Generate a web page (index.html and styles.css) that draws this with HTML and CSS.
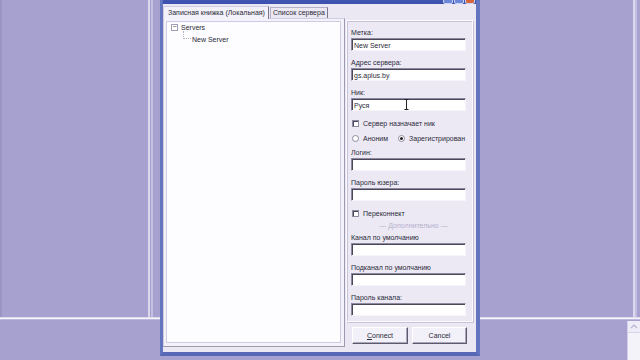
FILE: index.html
```html
<!DOCTYPE html>
<html lang="ru">
<head>
    <meta charset="UTF-8">
    <meta name="viewport" content="width=device-width, initial-scale=1.0">
    <title>Записная книжка</title>
    <link rel="stylesheet" href="styles.css">
</head>
<body>
<div class="desktop">
    <div class="bg-top">
        <div class="bg-left"></div>
        <div class="bg-split"></div>
        <div class="bg-main"></div>
        <div class="bg-split bg-split-right"></div>
        <div class="bg-edge"></div>
    </div>
    <div class="bg-bottom">
        <div class="bg-fill"></div>
        <div class="scrollbar">
            <div class="scroll-up">
                <svg width="8" height="5" viewBox="0 0 8 5"><path d="M1 4 L4 1 L7 4" fill="none" stroke="#b8b4d4" stroke-width="1.2"/></svg>
            </div>
        </div>
    </div>

    <div class="dialog">
        <div class="titlebar">
            <div class="title-buttons">
                <span class="tbtn"></span>
                <span class="tbtn"></span>
                <span class="tbtn tbtn-close"></span>
            </div>
        </div>
        <div class="dialog-body">
            <div class="left-col">
                <div class="tabs">
                    <div class="tab tab-active">Записная книжка (Локальная)</div>
                    <div class="tab">Список сервера</div>
                </div>
                <div class="tab-panel">
                    <div class="tree">
                        <div class="tree-root">
                            <span class="expander">−</span>
                            <span>Servers</span>
                        </div>
                        <div class="tree-child">
                            <span class="connector"></span>
                            <span>New Server</span>
                        </div>
                    </div>
                </div>
            </div>

            <div class="right-col">
                <div class="group">
                    <div class="field">
                        <div class="label">Метка:</div>
                        <div class="input">New Server</div>
                    </div>
                    <div class="field">
                        <div class="label">Адрес сервера:</div>
                        <div class="input">gs.aplus.by</div>
                    </div>
                    <div class="field">
                        <div class="label">Ник:</div>
                        <div class="input">Руся
                            <svg class="ibeam" width="5" height="11" viewBox="0 0 5 11"><path d="M0.5 0.5 H4.5 M2.5 0.5 V10.5 M0.5 10.5 H4.5" stroke="#222" stroke-width="1" fill="none"/></svg>
                        </div>
                    </div>
                    <div class="check-row">
                        <span class="checkbox"></span>
                        <span>Сервер назначает ник</span>
                    </div>
                    <div class="radio-row">
                        <span class="radio-item"><span class="radio"></span>Аноним</span>
                        <span class="radio-item"><span class="radio radio-on"></span>Зарегистрирован</span>
                    </div>
                    <div class="field">
                        <div class="label">Логин:</div>
                        <div class="input"></div>
                    </div>
                    <div class="field">
                        <div class="label">Пароль юзера:</div>
                        <div class="input"></div>
                    </div>
                    <div class="check-row check-row-tight">
                        <span class="checkbox"></span>
                        <span>Переконнект</span>
                    </div>
                    <div class="separator">— Дополнительно —</div>
                    <div class="field">
                        <div class="label">Канал по умолчанию</div>
                        <div class="input"></div>
                    </div>
                    <div class="field">
                        <div class="label">Подканал по умолчанию</div>
                        <div class="input"></div>
                    </div>
                    <div class="field">
                        <div class="label">Пароль канала:</div>
                        <div class="input"></div>
                    </div>
                </div>
                <div class="buttons">
                    <button class="btn"><u>C</u>onnect</button>
                    <button class="btn btn-cancel">Cancel</button>
                </div>
            </div>
        </div>
    </div>
</div>
</body>
</html>
```

FILE: styles.css
```css
body {
    margin: 0;
    font-family: "Liberation Sans", Arial, sans-serif;
    font-size: 7px;
    color: #2b2a38;
    background-color: #a7a1cf;
}

.desktop {
    position: relative;
    width: 640px;
    height: 360px;
    overflow: hidden;
    background-color: #a7a1cf;
}

/* background application behind the dialog */
.bg-top {
    display: flex;
    height: 317px;
    border-bottom: 1px solid #dedbee;
    box-shadow: 0 1px 0 #f6f5fb, 0 2px 0 #bdb8dc;
}

.bg-left {
    width: 148px;
    border-left: 2px solid #9b95c4;
    box-sizing: border-box;
}

.bg-split {
    width: 5px;
    border-left: 2px solid #dcd8ee;
    border-right: 2px solid #c4bfe0;
    box-sizing: border-box;
}

.bg-main {
    flex: 1;
}

.bg-split-right {
    width: 4px;
}

.bg-edge {
    width: 3px;
}

.bg-bottom {
    display: flex;
    height: 40px;
    margin-top: 3px;
}

.bg-fill {
    flex: 1;
}

.scrollbar {
    width: 12px;
    background-color: #f4f3fa;
    border-left: 1px solid #d2cfe6;
}

.scroll-up {
    height: 11px;
    display: flex;
    align-items: center;
    justify-content: center;
    background-color: #eeedf7;
    border-bottom: 1px solid #d8d5ea;
}

/* dialog window */
.dialog {
    position: absolute;
    left: 160px;
    top: -19px;
    width: 320px;
    height: 375px;
    box-sizing: border-box;
    background-color: #ebe8f4;
    border-left: 3px solid #6475c0;
    border-right: 4px solid #6475c0;
    border-bottom: 4px solid #5668b6;
    display: flex;
    flex-direction: column;
}

.titlebar {
    height: 23px;
    flex: none;
    background: linear-gradient(#5b6fd0, #3c51ad);
    position: relative;
}

.title-buttons {
    position: absolute;
    right: 1px;
    bottom: 0;
    display: flex;
    gap: 1px;
}

.tbtn {
    width: 8px;
    height: 12px;
    background-color: #6c86d8;
    border: 1px solid #c9d3f2;
    border-radius: 2px;
}

.tbtn-close {
    background-color: #d8653c;
}

.dialog-body {
    flex: 1;
    min-height: 0;
    display: flex;
    padding: 1px 3px 5px 0;
}

.left-col {
    width: 182px;
    flex: none;
    display: flex;
    flex-direction: column;
}

.tabs {
    display: flex;
    align-items: flex-end;
    height: 13px;
}

.tab {
    height: 10px;
    line-height: 10px;
    padding: 0 2px 0 2px;
    margin-left: 1px;
    white-space: nowrap;
    background-color: #ebe8f4;
    border: 1px solid #b4b0c8;
    border-bottom: none;
    border-right-color: #7a778c;
}

.tab-active {
    height: 12px;
    line-height: 12px;
    margin-left: 0;
    margin-bottom: -1px;
    padding: 0 3px 0 4px;
    background-color: #f3f1f9;
    border-color: #d0cde0;
    border-right: 1px solid #7a778c;
    position: relative;
}

.tab-panel {
    flex: 1;
    padding: 2px 3px 3px 2px;
    background-color: #f3f1f9;
    border: 1px solid #d0cde0;
    border-right-color: #9c99b0;
    border-bottom-color: #9c99b0;
    display: flex;
}

.tree {
    flex: 1;
    background-color: #fdfcff;
    border: 1px solid #cfcbe0;
    padding: 0 4px;
}

.tree-root {
    display: flex;
    align-items: center;
    height: 10px;
    gap: 3px;
}

.expander {
    width: 5px;
    height: 5px;
    border: 1px solid #a09db4;
    background-color: #ffffff;
    font-size: 7px;
    line-height: 4px;
    text-align: center;
    color: #444;
}

.tree-child {
    display: flex;
    align-items: flex-end;
    height: 11px;
    padding-left: 12px;
}

.connector {
    width: 7px;
    height: 7px;
    margin-bottom: 4px;
    margin-right: 1px;
    border-left: 1px dotted #b4b2c2;
    border-bottom: 1px dotted #b4b2c2;
}

.right-col {
    flex: 1;
    min-width: 0;
    padding-left: 1px;
    display: flex;
    flex-direction: column;
}

.group {
    margin-top: 15px;
    height: 302px;
    box-sizing: border-box;
    padding: 7px 6px 0 4px;
    border: 1px solid #fbfaff;
    box-shadow: inset 1px 1px 0 #c7c3da, 1px 1px 0 #c7c3da;
    background-color: #ece9f5;
    overflow: hidden;
}

.field {
    margin-bottom: 7px;
}

.label {
    height: 10px;
    line-height: 10px;
    white-space: nowrap;
}

.input {
    height: 13px;
    box-sizing: border-box;
    background-color: #ffffff;
    border: 1px solid;
    border-color: #8d8aa0 #f6f5fb #f6f5fb #8d8aa0;
    box-shadow: inset 1px 1px 0 #4a4858;
    padding: 2px 2px 0 2px;
    line-height: 9px;
    position: relative;
}

.ibeam {
    position: absolute;
    left: 52px;
    top: 0;
}

.check-row {
    display: flex;
    align-items: center;
    height: 10px;
    gap: 4px;
    padding-left: 1px;
    margin-bottom: 5px;
    white-space: nowrap;
}

.check-row-tight {
    margin-bottom: 3px;
}

.checkbox {
    width: 5px;
    height: 5px;
    flex: none;
    background-color: #ffffff;
    border: 1px solid #8d8aa0;
    box-shadow: inset 1px 1px 0 #4a4858;
}

.radio-row {
    display: flex;
    height: 10px;
    padding-left: 1px;
    margin-bottom: 5px;
    gap: 10px;
    white-space: nowrap;
}

.radio-item {
    display: flex;
    align-items: center;
    gap: 4px;
}

.radio {
    width: 5px;
    height: 5px;
    flex: none;
    border-radius: 50%;
    background-color: #ffffff;
    border: 1px solid #8d8aa0;
    position: relative;
}

.radio-on::after {
    content: "";
    position: absolute;
    left: 1px;
    top: 1px;
    width: 3px;
    height: 3px;
    border-radius: 50%;
    background-color: #222;
}

.separator {
    height: 10px;
    line-height: 10px;
    text-align: center;
    color: #b4b0cc;
    margin-bottom: 2px;
    padding-left: 10px;
}

.buttons {
    display: flex;
    gap: 4px;
    padding-left: 6px;
    margin-top: 5px;
}

.btn {
    width: 56px;
    height: 17px;
    padding: 0;
    font-family: "Liberation Sans", Arial, sans-serif;
    font-size: 7px;
    color: #2b2a38;
    background-color: #f2f0f8;
    border: 1px solid;
    border-color: #ffffff #5d5a6c #5d5a6c #ffffff;
    box-shadow: inset -1px -1px 0 #a9a6bc;
}

.btn-cancel {
    width: 55px;
}
```
